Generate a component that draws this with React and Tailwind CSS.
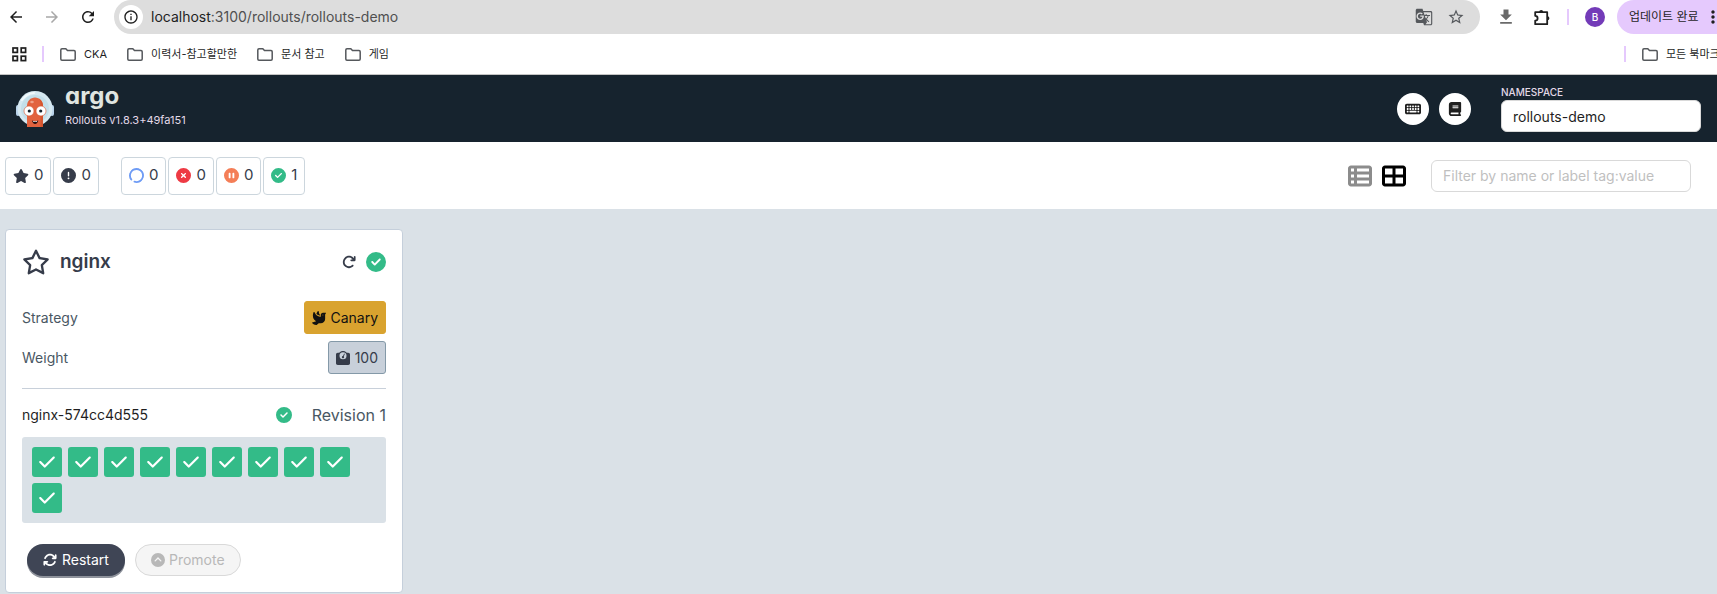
import React from 'react';
import {
  FaStar,
  FaRegStar,
  FaCircleExclamation,
  FaCircleNotch,
  FaCircleXmark,
  FaCirclePause,
  FaCircleCheck,
  FaTableList,
  FaTableCellsLarge,
  FaKeyboard,
  FaBook,
  FaArrowRotateRight,
  FaDove,
  FaWeightScale,
  FaCheck,
  FaArrowsRotate,
  FaCircleChevronUp,
} from 'react-icons/fa6';
import {
  MdArrowBack,
  MdArrowForward,
  MdRefresh,
  MdOutlineInfo,
  MdGTranslate,
  MdStarBorder,
  MdDownload,
  MdMoreVert,
} from 'react-icons/md';

const FolderIcon = () => (
  <svg width="16" height="13" viewBox="0 0 16 13" fill="none" stroke="#55585c" strokeWidth="1.5" aria-hidden="true">
    <path d="M.8 2c0-.7.5-1.2 1.200-1.200h3.800l1.700 1.800H14c.7 0 1.200.5 1.200 1.200V11c0 .7-.5 1.200-1.200 1.200H2c-.7 0-1.200-.5-1.200-1.200z" />
  </svg>
);

const AppsIcon = () => (
  <svg width="15" height="15" viewBox="0 0 15 15" fill="none" stroke="#1f1f1f" strokeWidth="1.700" aria-hidden="true">
    <rect x="1" y="1" width="4.400" height="4.400" />
    <rect x="9.200" y="1" width="4.400" height="4.400" />
    <rect x="1" y="9.200" width="4.400" height="4.400" />
    <rect x="9.200" y="9.200" width="4.400" height="4.400" />
  </svg>
);

const PuzzleIcon = () => (
  <svg width="17" height="17" viewBox="0 0 17 17" aria-hidden="true">
    <path
      d="M1.200 3.200h12v12h-12v-3.600a2.400 2.400 0 0 0 0-4.800z"
      fill="none"
      stroke="#1f1f1f"
      strokeWidth="1.800"
      strokeLinejoin="round"
    />
    <path d="M5.200 3a2 2 0 0 1 4 0zM13.400 7.200a2 2 0 0 1 0 4z" fill="#1f1f1f" />
  </svg>
);

const ArgoMascot = () => (
  <svg width="38" height="38" viewBox="0 0 38 38" aria-hidden="true">
    <rect x="0" y="15" width="4" height="11" rx="2" fill="#b9d3ea" />
    <rect x="34" y="15" width="4" height="11" rx="2" fill="#b9d3ea" />
    <circle cx="19" cy="18.500" r="17.500" fill="#d5e8f1" />
    <circle cx="19" cy="19" r="14" fill="#c3dfea" />
    <path d="M6 10a16 16 0 0 1 12-7" fill="none" stroke="#f2f9fc" strokeWidth="2" strokeLinecap="round" />
    <path d="M11 37V16c0-5 3.500-8.500 8-8.500s8 3.500 8 8.500v21z" fill="#e2633f" />
    <path d="M23.500 9c2.200 1.500 3.500 4 3.500 7v21h-2.500V17c0-3.500 0-6-1-8z" fill="#d4552f" />
    <ellipse cx="16" cy="12" rx="1.800" ry="1.300" fill="#f0a088" />
    <circle cx="13" cy="21" r="5" fill="#fff" stroke="#d9532f" strokeWidth=".6" />
    <circle cx="25" cy="21" r="5" fill="#fff" stroke="#d9532f" strokeWidth=".6" />
    <circle cx="13.300" cy="21" r="1.600" fill="#17232d" />
    <circle cx="24.700" cy="21" r="1.600" fill="#17232d" />
    <path d="M16 30.500c2 1 4.500 1 6.200 0-.4 2.300-1.500 3.500-3.100 3.500s-2.700-1.200-3.100-3.500z" fill="#2a1111" />
    <path d="M17 31c1.400.5 2.800.5 4.200 0l-.4 1h-3.400z" fill="#fff" />
  </svg>
);

const Bookmark = ({ children }) => (
  <a href="#" className="flex shrink-0 items-center gap-2 text-[11px] whitespace-nowrap text-[#1f1f1f]">
    <FolderIcon />
    {children}
  </a>
);

const Browser = () => (
  <div className="border-b border-[#c4c4c4] bg-white">
    <div className="flex h-[34px] items-center overflow-hidden">
      <div className="flex w-[114px] shrink-0 items-center gap-[18px] pl-[7px] text-lg text-[#1f1f1f]">
        <button aria-label="Back"><MdArrowBack /></button>
        <button aria-label="Forward" className="text-[#a8a8a8]"><MdArrowForward /></button>
        <button aria-label="Reload"><MdRefresh /></button>
      </div>
      <div className="flex h-full min-w-0 flex-1 items-center rounded-full bg-[#dddddd] pr-[15px] pl-[5px]">
        <button aria-label="Site information" className="flex size-6 shrink-0 items-center justify-center rounded-full bg-white text-base text-[#1f1f1f]">
          <MdOutlineInfo />
        </button>
        <div className="ml-2 flex-1 text-sm text-[#505050]">
          <span className="text-[#1f1f1f]">localhost</span>:3100/rollouts/rollouts-demo
        </div>
        <div className="flex items-center gap-[14px] text-lg text-[#55585c]">
          <button aria-label="Translate"><MdGTranslate /></button>
          <button aria-label="Bookmark"><MdStarBorder /></button>
        </div>
      </div>
      <div className="flex h-full w-[237px] shrink-0 items-center">
        <button aria-label="Downloads" className="ml-4 shrink-0 text-xl text-[#6a6a6a]"><MdDownload /></button>
        <button aria-label="Extensions" className="ml-[18px] shrink-0"><PuzzleIcon /></button>
        <span className="ml-4 h-4 w-[2px] shrink-0 bg-[#e5c9fd]" />
        <button aria-label="Profile" className="ml-4 flex size-5 shrink-0 items-center justify-center rounded-full bg-[#733bb8] text-[10px] font-medium text-white">B</button>
        <button className="ml-3 flex h-full shrink-0 items-center rounded-full bg-[#e5c9fd] px-3 text-xs whitespace-nowrap text-[#1f1f1f]">
          업데이트 완료
          <MdMoreVert className="ml-1 text-xl" />
        </button>
      </div>
    </div>
    <div className="flex h-10 items-center overflow-hidden pl-3">
      <button aria-label="Apps" className="shrink-0"><AppsIcon /></button>
      <span className="mr-4 ml-[15px] h-4 w-[2px] shrink-0 bg-[#e5c9fd]" />
      <nav className="flex flex-1 items-center gap-5">
        <Bookmark>CKA</Bookmark>
        <Bookmark>이력서-참고할만한</Bookmark>
        <Bookmark>문서 참고</Bookmark>
        <Bookmark>게임</Bookmark>
      </nav>
      <div className="flex w-[93px] shrink-0 items-center gap-4">
        <span className="h-4 w-[2px] shrink-0 bg-[#e5c9fd]" />
        <Bookmark>모든 북마크</Bookmark>
      </div>
    </div>
  </div>
);

const Header = () => (
  <header className="flex h-[67px] items-center bg-[#16232e] px-4 text-[#e3d9e8]">
    <ArgoMascot />
    <div className="ml-[11px] flex flex-col gap-2 pb-[2px]">
      <span className="text-2xl leading-4 font-bold text-[#e0e5e1] [font-feature-settings:'cv11']">argo</span>
      <span className="text-[11px] leading-4">Rollouts v1.8.3+49fa151</span>
    </div>
    <div className="ml-auto flex items-center gap-[10px] text-base text-[#1f1f1f]">
      <button aria-label="Keyboard shortcuts" className="flex size-8 items-center justify-center rounded-full bg-white"><FaKeyboard /></button>
      <button aria-label="Documentation" className="flex size-8 items-center justify-center rounded-full bg-white"><FaBook className="text-sm" /></button>
    </div>
    <div className="ml-[30px] flex w-[200px] flex-col">
      <label htmlFor="namespace" className="text-[10px] leading-[15px] font-medium">NAMESPACE</label>
      <input id="namespace" defaultValue="rollouts-demo" className="h-8 rounded-md border border-[#d9d9d9] bg-white px-[11px] text-sm text-[#1f1f1f] outline-none" />
    </div>
  </header>
);

const Stat = ({ icon, label, value }) => (
  <button aria-label={label} className="flex h-[38px] items-center gap-[5px] rounded border border-[#ccd6dd] bg-white px-[7px] text-[15px] text-[#363c4a]">
    {icon}
    {value}
  </button>
);

const Toolbar = () => (
  <div className="flex h-[67px] items-center bg-white pr-[26px] pl-[5px]">
    <div className="flex gap-[2px]">
      <Stat label="Favorites" value={0} icon={<FaStar className="text-base" />} />
      <Stat label="Needs attention" value={0} icon={<FaCircleExclamation />} />
    </div>
    <div className="ml-[22px] flex gap-[2px]">
      <Stat label="Progressing" value={0} icon={<FaCircleNotch className="rotate-[215deg] text-[#6f9cf5]" />} />
      <Stat label="Degraded" value={0} icon={<FaCircleXmark className="text-[#ee3a44]" />} />
      <Stat label="Paused" value={0} icon={<FaCirclePause className="text-[#f47e57]" />} />
      <Stat label="Healthy" value={1} icon={<FaCircleCheck className="text-[#33bb88]" />} />
    </div>
    <div className="ml-auto flex items-center gap-[10px] text-2xl">
      <button aria-label="List view" className="text-[#8c8c8c]"><FaTableList /></button>
      <button aria-label="Grid view" className="text-black"><FaTableCellsLarge /></button>
    </div>
    <input
      aria-label="Filter rollouts"
      placeholder="Filter by name or label tag:value"
      className="ml-[25px] h-8 w-[260px] rounded-md border border-[#d9d9d9] bg-white px-[11px] text-sm placeholder-[#bfbfbf] outline-none"
    />
  </div>
);

const PODS = Array.from({ length: 10 }, (_, i) => i + 1);

const RolloutCard = () => (
  <article className="w-[398px] rounded border border-[#c5cfdb] bg-white p-4 text-sm text-[#363c4a]">
    <div className="flex h-8 items-center">
      <button aria-label="Favorite" className="text-[28px]"><FaRegStar /></button>
      <h2 className="ml-[10px] text-[19px] font-semibold">nginx</h2>
      <button aria-label="Refresh" className="ml-auto text-sm"><FaArrowRotateRight /></button>
      <FaCircleCheck className="ml-[10px] text-xl text-[#33bb88]" />
    </div>
    <dl className="mt-[23px] flex flex-col gap-[7px]">
      <div className="flex items-center justify-between">
        <dt className="text-[#495763]">Strategy</dt>
        <dd className="flex h-[33px] items-center gap-1 rounded-[3px] border border-[#d9a32f] bg-[#d9a32f] px-[7px] text-[#111111]">
          <FaDove />
          Canary
        </dd>
      </div>
      <div className="flex items-center justify-between">
        <dt className="text-[#495763]">Weight</dt>
        <dd className="flex h-[33px] items-center gap-[5px] rounded-[3px] border border-[#8499a8] bg-[#c8d0da] px-[7px]">
          <FaWeightScale />
          100
        </dd>
      </div>
    </dl>
    <section className="mt-[14px] border-t border-[#c8d0da] pt-[14px]">
      <div className="flex h-6 items-center">
        <h3 className="text-[#1f1f1f]">nginx-574cc4d555</h3>
        <FaCircleCheck className="ml-auto text-base text-[#33bb88]" />
        <span className="ml-5 text-base text-[#495763]">Revision 1</span>
      </div>
      <ul className="mt-[10px] flex flex-wrap gap-1.5 rounded-[3px] bg-[#dae1e7] p-[10px]">
        {PODS.map((pod) => (
          <li key={pod} aria-label="Healthy pod" className="flex size-[30px] items-center justify-center rounded-[3px] bg-[#33bb88] text-lg text-white">
            <FaCheck />
          </li>
        ))}
      </ul>
    </section>
    <div className="mt-[21px] ml-[5px] flex gap-[10px]">
      <button className="flex h-8 items-center gap-[5px] rounded-full bg-[#3f4555] px-4 text-white shadow-[0_2px_0_#8e929b]">
        <FaArrowsRotate />
        Restart
      </button>
      <button disabled className="flex h-8 items-center gap-1 rounded-full border border-[#d9d9d9] bg-[#f5f5f5] px-[15px] text-[#b8b8b8]">
        <FaCircleChevronUp />
        Promote
      </button>
    </div>
  </article>
);

export default function App() {
  return (
    <div className="flex min-h-screen flex-col bg-[#dae1e7] font-['Inter','Noto_Sans_CJK_KR',sans-serif]">
      <Browser />
      <Header />
      <Toolbar />
      <main className="flex-1 pt-5 pl-[5px]">
        <RolloutCard />
      </main>
    </div>
  );
}
